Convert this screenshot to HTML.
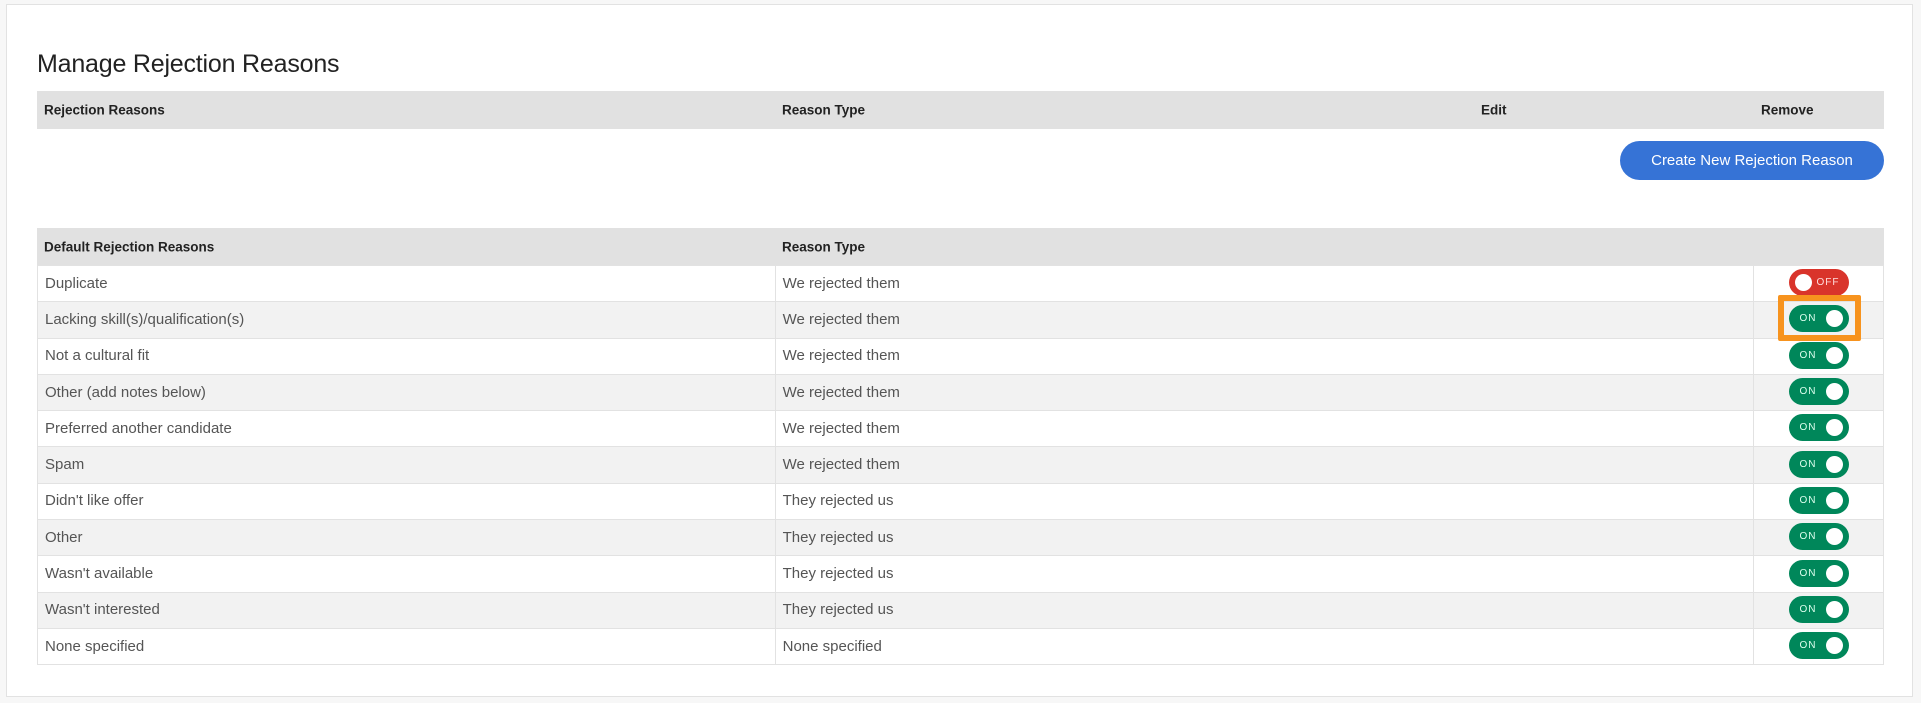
<!DOCTYPE html>
<html><head><style>
body{margin:0;width:1921px;height:703px;background:#f7f7f7;font-family:"Liberation Sans",sans-serif;position:relative;overflow:hidden}
.card{position:absolute;left:6px;top:4px;width:1907px;height:693px;background:#fff;border:1px solid #e2e2e2;box-sizing:border-box}
h1{position:absolute;left:37px;top:50px;margin:0;font-weight:normal;font-size:25px;color:#222;letter-spacing:-0.2px}
.hd{position:absolute;left:37px;width:1847px;background:#e1e1e1;font-weight:bold;font-size:13.5px;color:#222}
.hd span{position:absolute;top:50%;transform:translateY(-50%)}
.btn{position:absolute;left:1620px;top:141px;width:264px;height:39px;border-radius:20px;background:#3673d6;color:#fff;font-size:15px;text-align:center;line-height:39px}
table{position:absolute;left:37px;top:265px;width:1847px;border-collapse:collapse;font-size:15px;color:#555}
td{height:36.3px;border:1px solid #e2e2e2;padding:0 0 0 7px;box-sizing:border-box;line-height:18px}
tr:nth-child(even) td{background:#f2f2f2}
.tg{display:inline-block;position:relative;width:60px;height:27px;border-radius:14px;background:#00875a;vertical-align:middle;margin-top:-2px}
.tg b{position:absolute;top:5px;right:6px;width:17px;height:17px;border-radius:50%;background:#fff}
.tg i{position:absolute;left:11px;top:0;line-height:27px;font-style:normal;font-size:10px;color:#dfe;letter-spacing:1px}
.off{background:#d9342b}.off b{left:6px;right:auto}.off i{left:28px;color:#fdd}
.c3{text-align:center;padding:0}
.hl{position:absolute;left:1778px;top:295px;width:83px;height:46px;border:6px solid #f7931e;box-sizing:border-box;border-radius:2px}
</style></head><body>
<div class="card"></div>
<h1>Manage Rejection Reasons</h1>
<div class="hd" style="top:91px;height:38px"><span style="left:7px">Rejection Reasons</span><span style="left:745px">Reason Type</span><span style="left:1444px">Edit</span><span style="left:1724px">Remove</span></div>
<div class="btn">Create New Rejection Reason</div>
<div class="hd" style="top:228px;height:37px"><span style="left:7px">Default Rejection Reasons</span><span style="left:745px">Reason Type</span></div>
<table>
<colgroup><col style="width:738px"><col style="width:979px"><col style="width:130px"></colgroup>
<tr><td>Duplicate</td><td>We rejected them</td><td class="c3"><span class="tg off"><b></b><i>OFF</i></span></td></tr>
<tr><td>Lacking skill(s)/qualification(s)</td><td>We rejected them</td><td class="c3"><span class="tg"><i>ON</i><b></b></span></td></tr>
<tr><td>Not a cultural fit</td><td>We rejected them</td><td class="c3"><span class="tg"><i>ON</i><b></b></span></td></tr>
<tr><td>Other (add notes below)</td><td>We rejected them</td><td class="c3"><span class="tg"><i>ON</i><b></b></span></td></tr>
<tr><td>Preferred another candidate</td><td>We rejected them</td><td class="c3"><span class="tg"><i>ON</i><b></b></span></td></tr>
<tr><td>Spam</td><td>We rejected them</td><td class="c3"><span class="tg"><i>ON</i><b></b></span></td></tr>
<tr><td>Didn't like offer</td><td>They rejected us</td><td class="c3"><span class="tg"><i>ON</i><b></b></span></td></tr>
<tr><td>Other</td><td>They rejected us</td><td class="c3"><span class="tg"><i>ON</i><b></b></span></td></tr>
<tr><td>Wasn't available</td><td>They rejected us</td><td class="c3"><span class="tg"><i>ON</i><b></b></span></td></tr>
<tr><td>Wasn't interested</td><td>They rejected us</td><td class="c3"><span class="tg"><i>ON</i><b></b></span></td></tr>
<tr><td>None specified</td><td>None specified</td><td class="c3"><span class="tg"><i>ON</i><b></b></span></td></tr>
</table>
<div class="hl"></div>
</body></html>
